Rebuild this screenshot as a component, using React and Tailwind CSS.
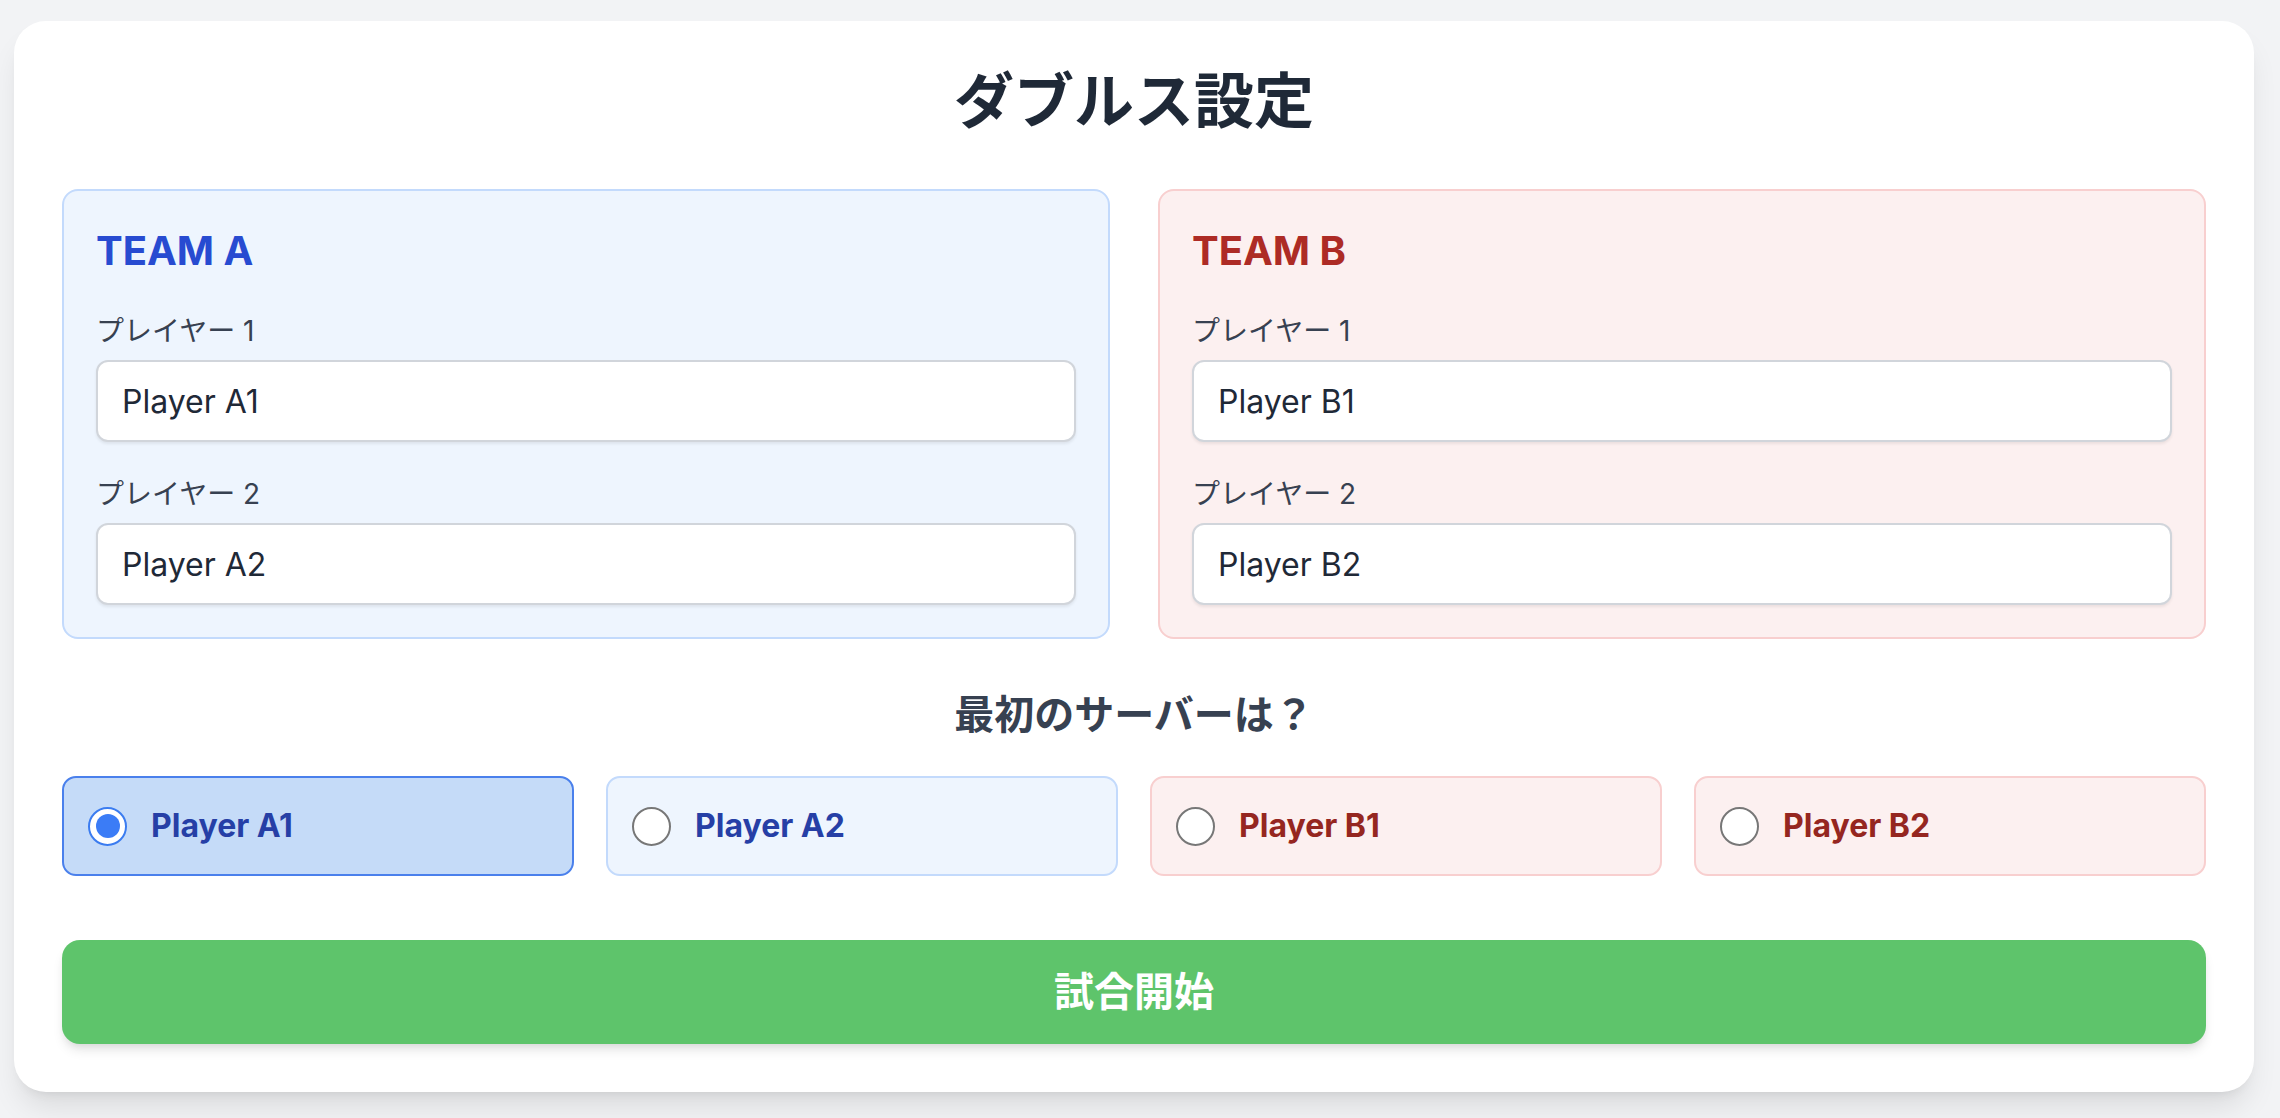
import React, { useState } from "react";

function TeamBox({ team, players, color }) {
  const isA = color === "blue";
  return (
    <div
      className={
        isA
          ? "rounded-[16px] border-2 border-[#c3dafc] bg-[#eef5fe] p-[32px]"
          : "rounded-[16px] border-2 border-[#f8cfcf] bg-[#fcf0f0] p-[32px]"
      }
    >
      <h2
        className={
          isA
            ? "text-[40px] leading-[56px] font-bold text-[#274bd1] mb-[32px]"
            : "text-[40px] leading-[56px] font-bold text-[#ad2b25] mb-[32px]"
        }
      >
        {team}
      </h2>
      <div className="flex flex-col gap-[32px]">
        {players.map((p, i) => (
          <div key={p}>
            <label className="block text-[28px] leading-[40px] text-[#374151] mb-[9px]">
              プレイヤー {i + 1}
            </label>
            <input
              type="text"
              defaultValue={p}
              className="block w-full h-[82px] rounded-[12px] border-2 border-[#d1d5db] bg-white px-[24px] text-[32px] text-[#1f2937] shadow-[0_2px_3px_rgba(0,0,0,0.07)] outline-none"
            />
          </div>
        ))}
      </div>
    </div>
  );
}

function RadioOption({ name, team, selected, onSelect }) {
  const isA = team === "A";
  let box;
  if (selected) {
    box = "border-[#4a80ec] bg-[#c5dbf8]";
  } else if (isA) {
    box = "border-[#c3dafc] bg-[#eef5fe]";
  } else {
    box = "border-[#f8cfcf] bg-[#fcf0f0]";
  }
  return (
    <button
      type="button"
      onClick={onSelect}
      className={
        "flex items-center gap-[24px] h-[100px] rounded-[14px] border-2 px-[24px] text-left " + box
      }
    >
      {selected ? (
        <span className="flex items-center justify-center w-[39px] h-[39px] rounded-full border-2 border-[#3b7cf0] bg-white shrink-0">
          <span className="w-[24px] h-[24px] rounded-full bg-[#3b7cf6]" />
        </span>
      ) : (
        <span className="w-[39px] h-[39px] rounded-full border-2 border-[#777777] bg-white shrink-0" />
      )}
      <span
        className={
          isA
            ? "text-[32px] leading-[48px] font-bold text-[#263fa6]"
            : "text-[32px] leading-[48px] font-bold text-[#952620]"
        }
      >
        {name}
      </span>
    </button>
  );
}

export default function App() {
  const [server, setServer] = useState("Player A1");
  const options = [
    { name: "Player A1", team: "A" },
    { name: "Player A2", team: "A" },
    { name: "Player B1", team: "B" },
    { name: "Player B2", team: "B" },
  ];
  return (
    <div className="min-h-[1118px] bg-[#f2f3f5] pt-[21px] pl-[14px] font-[Inter,'Noto_Sans_CJK_JP',sans-serif]">
      <div className="w-[2240px] rounded-[32px] bg-white px-[48px] pt-[44px] pb-[48px] shadow-[0_20px_30px_-6px_rgba(0,0,0,0.1),0_8px_12px_-8px_rgba(0,0,0,0.1)]">
        <h1 className="text-center text-[60px] leading-[72px] font-bold text-[#1f2937] mb-[52px]">
          ダブルス設定
        </h1>
        <div className="grid grid-cols-2 gap-[48px]">
          <TeamBox team="TEAM A" players={["Player A1", "Player A2"]} color="blue" />
          <TeamBox team="TEAM B" players={["Player B1", "Player B2"]} color="red" />
        </div>
        <h3 className="mt-[48px] mb-[33px] text-center text-[40px] leading-[56px] font-bold text-[#374151]">
          最初のサーバーは？
        </h3>
        <div className="grid grid-cols-4 gap-[32px]">
          {options.map((o) => (
            <RadioOption
              key={o.name}
              name={o.name}
              team={o.team}
              selected={server === o.name}
              onSelect={() => setServer(o.name)}
            />
          ))}
        </div>
        <button
          type="button"
          className="mt-[64px] w-full h-[104px] rounded-[18px] bg-[#5ec46b] text-white text-[40px] font-bold shadow-[0_8px_12px_-2px_rgba(0,0,0,0.1),0_4px_8px_-4px_rgba(0,0,0,0.1)]"
        >
          試合開始
        </button>
      </div>
    </div>
  );
}
